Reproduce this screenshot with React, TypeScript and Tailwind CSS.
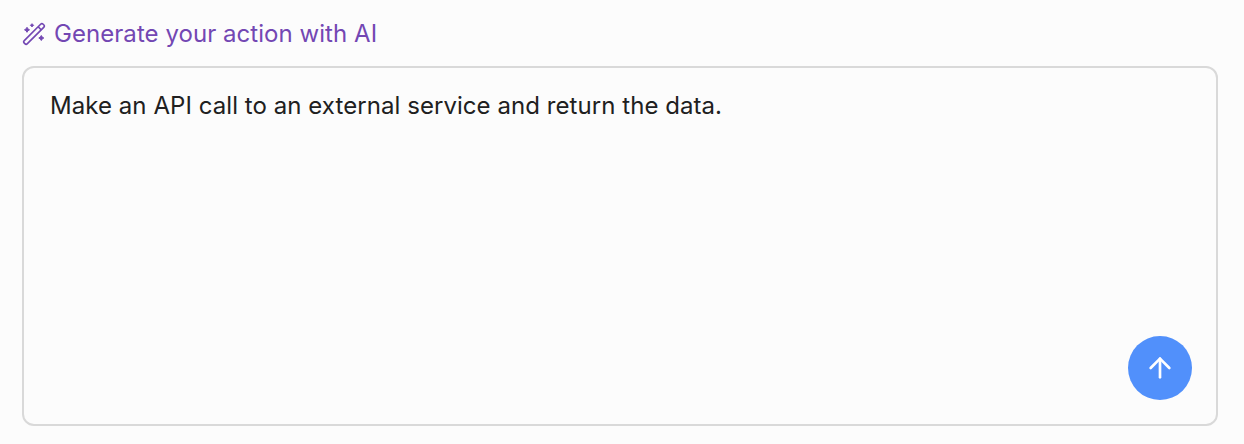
import { ArrowUp } from "lucide-react";
import { useState } from "react";

function MagicWand() {
  return (
    <svg className="size-6" viewBox="0 0 24 24" fill="none" stroke="currentColor" aria-hidden="true">
      <g strokeWidth="1.6">
        <rect x="-1.35" y="9.75" width="26.7" height="4.4" rx="1.8" transform="rotate(-45 12 11.95)" />
        <path d="M16.3 4.9l2.8 2.8" />
      </g>
      <path
        d="M5 5.3l.9 1.6 1.6.9-1.6.9-.9 1.6-.9-1.6-1.6-.9 1.6-.9zM10 1.7l.8.8.8.8-.8.8-.8.8-.8-.8-.8-.8.8-.8zM19.3 13.5l.9 1.6 1.6.9-1.6.9-.9 1.6-.9-1.6-1.6-.9 1.6-.9z"
        fill="currentColor"
        strokeWidth="1"
        strokeLinejoin="round"
      />
    </svg>
  );
}

export default function App() {
  const [prompt, setPrompt] = useState("Make an API call to an external service and return the data.");
  return (
    <main className="flex h-[444px] w-full flex-col bg-[#fcfcfc] pt-[18px] pr-[26px] pb-[18px] pl-[22px] font-['Inter',sans-serif]">
      <header className="flex h-8 items-center gap-2 text-[#7347b3]">
        <MagicWand />
        <h1 className="text-[24px] leading-8 tracking-[0.05px]">Generate your action with AI</h1>
      </header>
      <section className="mt-4 flex flex-1 flex-col rounded-xl border-2 border-[#d9d9d9] pt-[18px] pr-6 pb-6 pl-[26px]">
        <textarea
          className="w-full flex-1 resize-none bg-transparent text-[24px] leading-10 tracking-[0.06px] text-[#202020] outline-none"
          value={prompt}
          onChange={(e) => setPrompt(e.target.value)}
        />
        <button className="flex size-16 items-center justify-center self-end rounded-full bg-[#5190fb] text-white" aria-label="Submit">
          <ArrowUp className="size-8" />
        </button>
      </section>
    </main>
  );
}
